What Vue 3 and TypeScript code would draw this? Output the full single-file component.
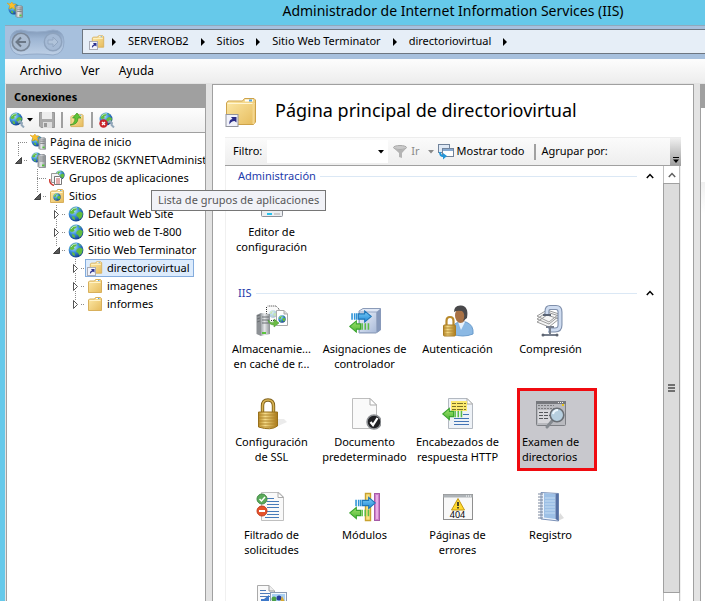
<script setup lang="ts">
import { ref } from 'vue'

interface TreeNode {
  label: string
  icon: string
  depth: number
  state: 'open' | 'closed' | 'leaf'
  up?: boolean
  down?: boolean
}

interface Feature {
  icon: string
  lines: string[]
  badge?: string
}

interface FeatureGroup {
  name: string
  items: Feature[]
}

const crumbs = ['SERVEROB2', 'Sitios', 'Sitio Web Terminator', 'directoriovirtual']
const menus = ['Archivo', 'Ver', 'Ayuda']

const tree: TreeNode[] = [
  { label: 'Página de inicio', icon: 'start', depth: 0, state: 'leaf', down: true },
  { label: 'SERVEROB2 (SKYNET\\Administrador)', icon: 'server', depth: 0, state: 'open', up: true },
  { label: 'Grupos de aplicaciones', icon: 'pools', depth: 1, state: 'leaf', up: true, down: true },
  { label: 'Sitios', icon: 'sites', depth: 1, state: 'open', up: true },
  { label: 'Default Web Site', icon: 'globe', depth: 2, state: 'closed', up: true, down: true },
  { label: 'Sitio web de T-800', icon: 'globe', depth: 2, state: 'closed', up: true, down: true },
  { label: 'Sitio Web Terminator', icon: 'globe', depth: 2, state: 'open', up: true },
  { label: 'directoriovirtual', icon: 'vdir', depth: 3, state: 'closed', up: true, down: true },
  { label: 'imagenes', icon: 'folder', depth: 3, state: 'closed', up: true, down: true },
  { label: 'informes', icon: 'folder', depth: 3, state: 'closed', up: true },
]

const groups: FeatureGroup[] = [
  { name: 'Administración', items: [{ icon: 'editor', lines: ['Editor de', 'configuración'] }] },
  {
    name: 'IIS',
    items: [
      { icon: 'cache', lines: ['Almacenamie...', 'en caché de r...'] },
      { icon: 'handlers', lines: ['Asignaciones de', 'controlador'] },
      { icon: 'auth', lines: ['Autenticación'] },
      { icon: 'compress', lines: ['Compresión'] },
      { icon: 'lock', lines: ['Configuración', 'de SSL'] },
      { icon: 'default-doc', lines: ['Documento', 'predeterminado'] },
      { icon: 'headers', lines: ['Encabezados de', 'respuesta HTTP'] },
      { icon: 'browse', lines: ['Examen de', 'directorios'] },
      { icon: 'filter-req', lines: ['Filtrado de', 'solicitudes'] },
      { icon: 'modules', lines: ['Módulos'] },
      { icon: 'errors', lines: ['Páginas de', 'errores'], badge: '404' },
      { icon: 'log', lines: ['Registro'] },
      { icon: 'mime', lines: [] },
    ],
  },
]

const filterText = ref('')
const selectedNode = ref('directoriovirtual')
const selectedFeature = ref('browse')
</script>

<template>
  <div class="window">
    <svg class="defs" aria-hidden="true">
      <defs>
        <linearGradient id="g-folder" x1="0" y1="0" x2="1" y2="1">
          <stop offset="0" stop-color="#fdeaa9" /><stop offset="1" stop-color="#e6bb5c" />
        </linearGradient>
        <radialGradient id="g-globe" cx=".35" cy=".3" r=".8">
          <stop offset="0" stop-color="#b9e6fc" /><stop offset=".45" stop-color="#3a8edb" /><stop offset="1" stop-color="#0c2f80" />
        </radialGradient>
        <linearGradient id="g-gold" x1="0" y1="0" x2="1" y2="0">
          <stop offset="0" stop-color="#b98a25" /><stop offset=".35" stop-color="#f6dd8b" /><stop offset="1" stop-color="#a87715" />
        </linearGradient>
        <linearGradient id="g-steel" x1="0" y1="0" x2="1" y2="0">
          <stop offset="0" stop-color="#a3a8ac" /><stop offset=".4" stop-color="#e6e8ea" /><stop offset="1" stop-color="#8b9094" />
        </linearGradient>
        <linearGradient id="g-box" x1="0" y1="0" x2="1" y2="1">
          <stop offset="0" stop-color="#eef3fb" /><stop offset="1" stop-color="#a9bad9" />
        </linearGradient>
        <linearGradient id="g-green" x1="0" y1="0" x2="0" y2="1">
          <stop offset="0" stop-color="#9fe26a" /><stop offset="1" stop-color="#4fb738" />
        </linearGradient>
        <linearGradient id="g-blue" x1="0" y1="0" x2="0" y2="1">
          <stop offset="0" stop-color="#7fd0fa" /><stop offset="1" stop-color="#1c86d4" />
        </linearGradient>
        <linearGradient id="g-nav" x1="0" y1="0" x2="0" y2="1">
          <stop offset="0" stop-color="#8199b8" /><stop offset=".35" stop-color="#9db5d3" /><stop offset="1" stop-color="#bed0e6" />
        </linearGradient>
      </defs>

      <symbol id="globe" viewBox="0 0 16 16">
        <circle cx="8" cy="8" r="7.4" fill="url(#g-globe)" />
        <path d="M3 3.5 6 1.6 9 2 8 4 6 5 6.5 7 4 8 1.5 7zM9 7 12 5.5 14.8 7 14 11 11.5 13.5 10 11 8 9.500zM4 10 6.500 11 7 14 4.500 13zM10 1.300 13 3 11.500 4z" fill="#62bd3f" />
        <path d="M3 5Q5 1.600 9 1.800" stroke="#d8f2ff" stroke-width="1" fill="none" opacity=".7" />
      </symbol>
      <symbol id="tower" viewBox="0 0 9 14">
        <path d="M1 1 7 .500 8.500 1.500V13.500H2L1 12.500z" fill="url(#g-steel)" stroke="#80858a" stroke-width=".8" />
        <path d="M2.500 3H7.500M2.500 5H7.500M2.500 7H7.500" stroke="#6a6d70" stroke-width=".8" />
        <rect x="5" y="10.500" width="2.400" height="1.800" fill="#53c438" />
      </symbol>
      <symbol id="server" viewBox="0 0 16 16">
        <use href="#globe" x="1" y="0" width="11" height="11" />
        <use href="#tower" x="7" y="2" width="9" height="14" />
      </symbol>
      <symbol id="start" viewBox="0 0 16 16">
        <use href="#globe" x="1" y="1" width="12" height="12" />
        <path d="M0 1 3 2 5 0 6 2 9 2 7 4 8 7 5 5.500 2 7 3 4z" fill="#f9c02c" stroke="#dc9a1c" stroke-width=".5" />
        <use href="#tower" x="8" y="3" width="8" height="13" />
      </symbol>
      <symbol id="folder" viewBox="0 0 16 16">
        <path d="M1.500 4V14.500H14.500V2.500L13.500 1.500H8.500L7.500 3H2.500z" fill="url(#g-folder)" stroke="#d8b05c" />
        <path d="M9 2.500H13" stroke="#fff" /><path d="M11 2.500H12.500" stroke="#59a7dd" />
        <path d="M2.500 4.500H13.500" stroke="#fff3c9" />
      </symbol>
      <symbol id="vdir" viewBox="0 0 16 16">
        <use href="#folder" x="2" y="0" width="14" height="15" />
        <rect x=".5" y="7.500" width="8" height="8" fill="#f3f4fb" stroke="#a9acb6" />
        <path d="M3 14Q2.500 11 5 10.500L4 9H7.500V12.500L6 11.500Q4 12 3 14" fill="#2c318f" />
      </symbol>
      <symbol id="vdir-big" viewBox="0 0 32 32">
        <path d="M1.500 6V27.500H28.500L30.500 25V3L29 1.500H19.500L17.500 4H3z" fill="url(#g-folder)" stroke="#cda24a" />
        <path d="M2.500 6.500H29.500" stroke="#fff5d2" /><rect x="20" y="2.500" width="8" height="2" fill="#fff" /><rect x="24" y="2.500" width="3" height="2" fill="#58a4d8" />
        <path d="M28.500 6V27" stroke="#f4d68e" stroke-width="2" />
        <rect x="1" y="17.500" width="12" height="12" fill="#f1f2fb" stroke="#92949d" />
        <path d="M4.500 27.500Q3.500 22.500 7.500 22L6 20H11.500V25.500L9.500 24Q6 24 4.500 27.500" fill="#2a2c86" />
      </symbol>
      <symbol id="sites" viewBox="0 0 16 16">
        <use href="#folder" width="16" height="16" />
        <use href="#globe" x="4" y="5" width="8" height="8" />
      </symbol>
      <symbol id="pools" viewBox="0 0 16 16">
        <use href="#globe" x="6" y="0" width="10" height="10" />
        <path d="M2.500 3.500H8.500L10.500 5.500V12.500H2.500z" fill="#f3f3f3" stroke="#999" />
        <path d="M5.500 6.500H10.500L12.500 8.500V14.500H5.500z" fill="#fff" stroke="#777" />
        <path d="M7 9H11M7 11H11M7 13H11" stroke="#c45c5c" />
        <path d="M.8 9Q0 14 5 15.500" stroke="#cf3d35" stroke-width="1.500" fill="none" />
      </symbol>
      <symbol id="plug-globe" viewBox="0 0 16 16">
        <use href="#globe" x="0" y="0" width="14" height="14" />
        <path d="M9 10.500 11 9 13 11 12.500 13 15 15.500" stroke="#93a8ba" stroke-width="2" fill="none" />
      </symbol>
      <symbol id="disconnect" viewBox="0 0 16 16">
        <use href="#plug-globe" width="16" height="16" />
        <circle cx="4.500" cy="11.500" r="4.200" fill="#c9262b" /><path d="M3 10 6 13M6 10 3 13" stroke="#fff" stroke-width="1.400" />
      </symbol>
      <symbol id="save" viewBox="0 0 16 16">
        <path d="M.5.500H15.500V15.500H2L.5 14z" fill="#a9a9a9" stroke="#979797" />
        <rect x="3" y="0" width="10" height="7" fill="#ededed" /><rect x="4" y="10" width="9" height="6" fill="#dedede" /><rect x="5" y="11" width="3" height="4" fill="#999" />
      </symbol>
      <symbol id="folder-up" viewBox="0 0 16 16">
        <use href="#folder" x="0" y="1" width="16" height="15" />
        <path d="M1 13Q6 12 6 6H3.500L8 1 12 6H9Q9 13 1 13" fill="#5fc336" stroke="#3a9420" stroke-width=".7" />
      </symbol>
      <symbol id="arrow-left" viewBox="0 0 20 12">
        <path d="M.700 6 7 .700V3.500H11V8.500H7V11.300z" fill="url(#g-green)" stroke="#3ba52f" />
        <path d="M12.500 3V9M15.500 3V9M18.500 3V9" stroke="#5cbd45" stroke-width="1.500" />
      </symbol>
      <symbol id="arrow-right" viewBox="0 0 20 12">
        <path d="M19.300 6 13 .700V3.500H7V8.500H13V11.300z" fill="url(#g-blue)" stroke="#1f76b8" />
        <path d="M1 3V9M3.500 3V9M5.500 3V9" stroke="#2f94d8" stroke-width="1.500" />
      </symbol>

      <symbol id="editor" viewBox="0 0 32 32">
        <rect x="5.500" y="2.500" width="21" height="26" rx="1" fill="#eceef1" stroke="#8c9098" />
        <rect x="8.500" y="6.500" width="15" height="16" fill="#f8fbff" stroke="#a9b4c4" />
        <path d="M10 20.500H22" stroke="#98a9c2" /><path d="M11 26H16" stroke="#25c2ed" stroke-width="2" /><path d="M18 26H24" stroke="#aaa" />
      </symbol>
      <symbol id="cache" viewBox="0 0 32 32">
        <path d="M10.500 2V15.500H23V4L20 1H11.500" fill="#fafafa" stroke="#333" stroke-dasharray="1 1" />
        <use href="#globe" x="13" y="5" width="8" height="8" opacity=".35" />
        <path d="M.500 10 5 8V31L.500 29z" fill="#8d9195" /><path d="M5 8 14 9V29L5 31z" fill="url(#g-steel)" /><path d="M1 11 4 10M1 14 4 13M1 17 4 16M6 12H13M6 15H13M6 18H13" stroke="#6b6f73" /><rect x="6" y="27" width="4" height="2" fill="#5bc43d" />
        <path d="M20.500 5.500H28L31.500 9V20.500H20.500z" fill="#fff" stroke="#aaa" /><path d="M28 5.500V9H31.500" fill="#ddd" stroke="#aaa" />
        <use href="#globe" x="22" y="10" width="8" height="8" />
        <path d="M12 15Q15 19 18 17V14L23 18 18 22V20Q13 20 12 15" fill="#6cbb45" stroke="#4c9a38" stroke-width=".6" />
      </symbol>
      <symbol id="handlers" viewBox="0 0 32 32">
        <path d="M10 6 14 3.500H31.500V25L27 28H10z" fill="#dfe7f5" stroke="#8b9bb8" /><path d="M27.500 7 31.500 3.500V25L27.500 28z" fill="#8598bb" />
        <rect x="10.500" y="7" width="17" height="20.500" fill="url(#g-box)" stroke="#98a8c5" />
        <use href="#arrow-right" x="2" y="5" width="21" height="13" /><use href="#arrow-left" x="0" y="15" width="21" height="13" />
      </symbol>
      <symbol id="auth" viewBox="0 0 32 32">
        <path d="M10 29Q9 18 18 17L24 17Q32 20 31 29Q21 33 10 29" fill="#8bb9e4" stroke="#6a9ccc" />
        <path d="M16 17 19 25 23 17z" fill="#e7f1fb" />
        <ellipse cx="18.500" cy="10.500" rx="5.500" ry="7.500" fill="#a87145" /><path d="M12 7Q12 0 19 .500 27 1 25 13L21 16Q24 9 20 6 15 5 12 7" fill="#49484a" />
        <path d="M4.500 20V16Q4.500 12 8 12T11.500 16V20" stroke="#b98a2c" stroke-width="2.200" fill="none" />
        <rect x="1.500" y="20" width="12" height="11" rx="1" fill="url(#g-gold)" stroke="#a87c26" /><path d="M2 23H13M2 26H13M2 29H13" stroke="#b58a34" />
      </symbol>
      <symbol id="compress" viewBox="0 0 32 32">
        <path d="M2 17 14 22 24 14 12 10zM2 14 14 19 24 11 12 7zM2 11 14 17 24 9 12 5z" fill="#f5f5f5" stroke="#9b9b9b" />
        <path d="M12 10V6Q12 2.500 15 2.500H21Q25 2.500 25 7V20Q25 25 20 25H13" stroke="#7f8fab" stroke-width="5" fill="none" />
        <path d="M12 10V6Q12 2.500 15 2.500H21Q25 2.500 25 7V20Q25 25 20 25H13" stroke="#cfdcf0" stroke-width="2.800" fill="none" />
        <path d="M8 10H16" stroke="#596273" stroke-width="2" /><path d="M15 22V30M8 30H22M11 22H19" stroke="#777f8d" stroke-width="2" /><circle cx="8" cy="30" r="1.500" fill="#5d6470" /><circle cx="22" cy="30" r="1.500" fill="#5d6470" />
      </symbol>
      <symbol id="lock" viewBox="0 0 32 32">
        <path d="M22 28 31 24 28 21H22z" fill="#ddd" opacity=".6" />
        <path d="M6.500 15V8Q6.500 2 12 2T17.500 8V15" stroke="#80611b" stroke-width="3.400" fill="none" /><path d="M6.500 15V8Q6.500 2 12 2T17.500 8V15" stroke="#d8b455" stroke-width="1.600" fill="none" />
        <path d="M2.500 14H21.500V28Q15 33 2.500 29z" fill="url(#g-gold)" stroke="#98701b" />
        <path d="M3 17H21M3 20H21M3 23H21M3 26H21M5 29H19" stroke="#b0852c" />
      </symbol>
      <symbol id="default-doc" viewBox="0 0 32 32">
        <path d="M3.500.500H21L27.500 7V30.500H3.500z" fill="#fafafa" stroke="#bdbdbd" /><path d="M21 .500V7H27.500z" fill="#fff" stroke="#aaa" />
        <circle cx="25" cy="24" r="7" fill="#202124" stroke="#8f9296" stroke-width="1.500" /><path d="M21.500 24 24 27 28.500 20" stroke="#fff" stroke-width="2.300" fill="none" />
      </symbol>
      <symbol id="headers" viewBox="0 0 32 32">
        <path d="M6.500.500H25L30.500 6V30.500H6.500z" fill="#eef2f7" stroke="#b3b9c1" /><path d="M25 .500V6H30.500z" fill="#fff" stroke="#aaa" />
        <rect x="9" y="3" width="16" height="10" fill="#fbe96f" /><path d="M10 5.500H24M10 8.500H24M10 11.500H24" stroke="#7a7028" stroke-dasharray="4 1 6 1" />
        <path d="M21 16.500H27M12 20.500H27M12 23.500H27M12 26.500H27" stroke="#4374b5" /><use href="#arrow-left" x="0" y="9" width="21" height="14" />
      </symbol>
      <symbol id="browse" viewBox="0 0 32 32">
        <rect x="1.500" y="3.500" width="29" height="24" rx="1" fill="#b9babf" stroke="#7d7f84" /><rect x="1" y="3" width="30" height="3" fill="#76787d" /><path d="M23 4.500H29" stroke="#eee" stroke-dasharray="1 1" /><rect x="27" y="6" width="2" height="2" fill="#e6c21c" />
        <path d="M3 7.500H19M3 10.500H20" stroke="#7b7c80" stroke-dasharray="2 1" /><rect x="3" y="12" width="13" height="13" fill="#d7d7db" /><path d="M4 14.500H13M4 17.500H15M4 20.500H14" stroke="#55575b" stroke-dasharray="4 1" />
        <path d="M17 23 12 29" stroke="#858a90" stroke-width="3" stroke-linecap="round" /><circle cx="22" cy="17" r="6.800" fill="#b7cfdf" stroke="#696e74" stroke-width="1.600" /><path d="M18 16Q19 12 23 12" stroke="#eef8ff" stroke-width="2" fill="none" />
      </symbol>
      <symbol id="filter-req" viewBox="0 0 32 32">
        <path d="M5.500 1.500H23L27.500 6V29.500H5.500z" fill="#f9f9f9" stroke="#bfbfbf" /><path d="M22 1.500V6.500H27.500z" fill="#fff" stroke="#aaa" /><path d="M11 7.500H18M11 10.500H23M11 13.500H23M11 16.500H23M11 20.500H23M11 23.500H23M9 26.500H23" stroke="#477bb9" />
        <circle cx="6" cy="8" r="5" fill="#5aab5a" stroke="#418a45" /><path d="M3.500 8 5.500 10 9 6" stroke="#fff" stroke-width="1.500" fill="none" /><circle cx="6" cy="20" r="5" fill="#e5532c" stroke="#c53c1c" /><path d="M3 20H9" stroke="#fff" stroke-width="2" />
      </symbol>
      <symbol id="modules" viewBox="0 0 32 32">
        <path d="M16.500 2.500H21.500V29.500H16.500z" fill="#f8e184" stroke="#c9a22e" stroke-width="1.400" /><rect x="25.500" y="2.500" width="5" height="27" fill="#ce7fcb" stroke="#a65ba7" />
        <path d="M28 4V28" stroke="#e9aee5" stroke-width="2" />
        <use href="#arrow-right" x="6" y="5" width="21" height="14" /><use href="#arrow-left" x="0" y="15" width="21" height="14" />
      </symbol>
      <symbol id="errors" viewBox="0 0 32 32">
        <rect x="1.500" y="3.500" width="29" height="25" fill="#f8f8f8" stroke="#8f8f8f" /><rect x="1.500" y="3.500" width="29" height="3" fill="#aeb3b7" /><path d="M24 5H30" stroke="#fff" stroke-dasharray="1 1" />
        <path d="M16 7.500 22.500 19H9.500z" fill="#ffd92f" stroke="#c39812" /><path d="M16 11V15M16 16V17.500" stroke="#222" stroke-width="1.600" />
      </symbol>
      <symbol id="log" viewBox="0 0 32 32">
        <path d="M23 30 29 27 25 22z" fill="#ddd" /><path d="M6 1.500 23.500 2.500V30L6 28z" fill="#eef4fd" stroke="#7c92b8" /><path d="M9 2 20.500 3V28L9 26.500z" fill="#9dc0e6" /><path d="M20.500 3 23.500 2.500V30L20.500 28z" fill="#5570a3" /><path d="M10 7H20M10 10H20M10 13H20M10 16H20M10 19H20M10 22H20" stroke="#c4dcf3" />
        <path d="M7.500 2V28" stroke="#d8e2ef" /><path d="M3 3H8M3 6H8M3 9H8M3 12H8M3 15H8M3 18H8M3 21H8M3 24H8M3 27H8" stroke="#7a879d" />
      </symbol>
      <symbol id="mime" viewBox="0 0 32 32">
        <path d="M1.500 1.500H13L18.500 7V30.500H1.500z" fill="#fafafa" stroke="#aaa" /><path d="M13 1.500V7H18.500" fill="#eee" stroke="#999" /><path d="M4 6.500H10M4 9.500H14M4 12.500H14" stroke="#4e7cba" />
        <rect x="14.500" y="8.500" width="16" height="22" fill="#f3f8fd" stroke="#8a9bb3" /><rect x="16" y="10" width="13" height="20" fill="#a9cff2" /><path d="M5 15H8L13 11V24L8 20H5z" fill="#3d78c9" /><circle cx="18" cy="15" r="2.500" fill="#4ca247" /><circle cx="23" cy="14" r="2.500" fill="#263e9b" /><path d="M24 18 26 12 29 18z" fill="#d9a92f" />
      </symbol>
      <symbol id="funnel" viewBox="0 0 14 14">
        <ellipse cx="7" cy="2.500" rx="6.500" ry="2" fill="#c9c9c9" stroke="#a8a8a8" /><path d="M.500 3Q7 6 13.500 3L9 8V13L6 12V8z" fill="#b4b4b4" />
      </symbol>
      <symbol id="show-all" viewBox="0 0 16 16">
        <rect x=".5" y=".5" width="11" height="8" fill="#dfe9f5" stroke="#71839b" /><rect x="4.500" y="4.500" width="11" height="8" fill="#fff" stroke="#71839b" /><path d="M5 6H15" stroke="#87a9d0" stroke-width="2" /><path d="M1 8Q1 13 5 13V15.500L9 12 5 9V11Q3 11 3 8z" fill="#2596d8" />
      </symbol>
      <symbol id="chevron" viewBox="0 0 8 6"><path d="M.800 5 4 1.500 7.200 5" fill="none" stroke="currentColor" stroke-width="1.500" /></symbol>
      <symbol id="caret" viewBox="0 0 6 4"><path d="M0 0H6L3 3.500z" fill="currentColor" /></symbol>
      <symbol id="crumb" viewBox="0 0 4 8"><path d="M0 0 4 4 0 8z" fill="#000" /></symbol>
    </svg>

    <header class="title-bar">
      <svg class="i16"><use href="#start" /></svg>
      <span class="title-text">Administrador de Internet Information Services (IIS)</span>
    </header>

    <div class="shell">
      <nav class="nav-bar" aria-label="Ruta">
        <div class="history">
          <svg class="history-bg" viewBox="0 0 56 27" aria-hidden="true">
            <path d="M12 1Q20 3 28 3T44 1Q55 1 55 13T44 26Q36 25 28 25T12 26Q1 25 1 13T12 1" fill="url(#g-nav)" stroke="#93aac8" />
          </svg>
          <button type="button" class="round" aria-label="Atrás">
            <svg viewBox="0 0 20 20"><circle cx="10" cy="10" r="8.700" fill="#aabbd0" stroke="#7a8798" stroke-width="1.600" /><path d="M15 10H6M10 5.500 5.500 10 10 14.500" fill="none" stroke="#6b7786" stroke-width="2" /></svg>
          </button>
          <button type="button" class="round" aria-label="Adelante">
            <svg viewBox="0 0 20 20"><circle cx="10" cy="10" r="8.700" fill="#a5bad5" stroke="#8ea3be" stroke-width="1.400" /><path d="M5 8H10V5L15 10 10 15V12H5z" fill="#b0c3da" stroke="#91a6c1" /></svg>
          </button>
        </div>
        <div class="address">
          <svg class="i16"><use href="#vdir" /></svg>
          <svg class="crumb-arrow"><use href="#crumb" /></svg>
          <template v-for="c in crumbs" :key="c">
            <button type="button" class="crumb">{{ c }}</button>
            <svg class="crumb-arrow"><use href="#crumb" /></svg>
          </template>
        </div>
      </nav>

      <nav class="menu-bar" aria-label="Menú">
        <button v-for="m in menus" :key="m" type="button">{{ m }}</button>
      </nav>

      <div class="panes">
        <aside class="connections">
          <h2>Conexiones</h2>
          <div class="conn-tools">
            <button type="button" class="tool" aria-label="Conectar">
              <svg class="i16"><use href="#plug-globe" /></svg><svg class="caret"><use href="#caret" /></svg>
            </button>
            <button type="button" class="tool" aria-label="Guardar"><svg class="i16"><use href="#save" /></svg></button>
            <i class="sep"></i>
            <button type="button" class="tool" aria-label="Subir"><svg class="i16"><use href="#folder-up" /></svg></button>
            <i class="sep"></i>
            <button type="button" class="tool" aria-label="Desconectar"><svg class="i16"><use href="#disconnect" /></svg></button>
          </div>
          <ul class="tree" role="tree">
            <li v-for="n in tree" :key="n.label" role="treeitem" :class="['node', 'depth-' + n.depth]">
              <svg class="guide" viewBox="0 0 18 18" aria-hidden="true">
                <path v-if="n.up" :d="n.state === 'leaf' ? 'M8.500 0V9' : 'M8.500 0V5'" class="dots" />
                <path v-if="n.down" :d="n.state === 'leaf' ? 'M8.500 10V18' : 'M8.500 14V18'" class="dots" />
                <path :d="n.state === 'leaf' ? 'M8 9.500H18' : 'M14 9.500H18'" class="dots" />
                <path v-if="n.state === 'open'" d="M11.500 6.500V12.500H5.500z" class="tri-open" />
                <path v-if="n.state === 'closed'" d="M6.500 5.500 10.500 9.500 6.500 13.500z" class="tri-closed" />
              </svg>
              <button type="button" :class="['node-body', { selected: n.label === selectedNode }]" @click="selectedNode = n.label">
                <svg class="i16"><use :href="'#' + n.icon" /></svg><span class="node-label">{{ n.label }}</span>
              </button>
            </li>
          </ul>
        </aside>

        <main class="workspace">
          <div class="page-head">
            <svg class="i32"><use href="#vdir-big" /></svg>
            <h1>Página principal de directoriovirtual</h1>
          </div>
          <div class="filter-bar">
            <label for="filter">Filtro:</label>
            <div class="combo">
              <input id="filter" v-model="filterText" type="text" />
              <button type="button" aria-label="Filtros recientes"><svg class="caret"><use href="#caret" /></svg></button>
            </div>
            <button type="button" class="tool go" disabled>
              <svg class="funnel"><use href="#funnel" /></svg><span>Ir</span><svg class="caret"><use href="#caret" /></svg>
            </button>
            <button type="button" class="tool show"><svg class="i16"><use href="#show-all" /></svg><span>Mostrar todo</span></button>
            <i class="sep"></i>
            <span>Agrupar por:</span>
            <button type="button" class="overflow" aria-label="Más opciones">
              <svg viewBox="0 0 6 6"><path d="M0 .500H6" stroke="#000" /><path d="M0 2.500H6L3 6z" /></svg>
            </button>
          </div>
          <div class="list-wrap">
            <div class="list">
              <section v-for="g in groups" :key="g.name" class="group">
                <header>
                  <h3>{{ g.name }}</h3><hr />
                  <button type="button" :aria-label="'Contraer ' + g.name"><svg class="chev"><use href="#chevron" /></svg></button>
                </header>
                <div class="grid">
                  <button
                    v-for="f in g.items" :key="f.icon" type="button"
                    :class="['feature', { active: f.icon === selectedFeature }]"
                    :aria-label="f.lines.join(' ') || 'Tipos MIME'"
                    @click="selectedFeature = f.icon"
                  >
                    <span class="picture">
                      <svg class="i32"><use :href="'#' + f.icon" /></svg>
                      <span v-if="f.badge" class="badge">{{ f.badge }}</span>
                    </span>
                    <span class="caption"><span v-for="l in f.lines" :key="l">{{ l }}</span></span>
                  </button>
                </div>
              </section>
            </div>
            <div class="scroll" aria-hidden="true">
              <div class="scroll-btn"><svg class="chev"><use href="#chevron" /></svg></div>
              <div class="thumb"><i></i><i></i><i></i></div>
              <div class="scroll-end"></div>
            </div>
          </div>
        </main>

        <aside class="actions">
          <div class="actions-head"></div>
          <div class="actions-body"></div>
        </aside>
      </div>
    </div>

    <div class="tooltip" role="tooltip">Lista de grupos de aplicaciones</div>
  </div>
</template>

<style>
body {
  margin: 0;
  overflow: hidden;
}
</style>

<style scoped>
.window {
  position: relative;
  display: flex;
  flex-direction: column;
  height: 100vh;
  overflow: hidden;
  background: #66c9ea;
  color: #000;
  font-family: 'Noto Sans', 'Open Sans', sans-serif;
  font-size: 11px;
  line-height: 15px;
}
.window * {
  box-sizing: border-box;
}
.defs {
  position: absolute;
  width: 0;
  height: 0;
}
svg {
  display: block;
  flex: none;
}
button {
  margin: 0;
  padding: 0;
  border: 0;
  background: none;
  color: inherit;
  font: inherit;
}
h1, h2, h3, ul {
  margin: 0;
  padding: 0;
  list-style: none;
  font-size: 11px;
  font-weight: 400;
}
.i16 { width: 16px; height: 16px; }
.i32 { width: 32px; height: 32px; }
.caret { width: 6px; height: 4px; }
.chev { width: 8px; height: 6px; }

.title-bar {
  display: flex;
  align-items: flex-start;
  flex: none;
  height: 25px;
  padding: 2px 0 0 7px;
}
.title-text {
  flex: 1;
  padding-left: 178px;
  text-align: center;
  font-size: 14px;
  line-height: 18px;
  white-space: nowrap;
}

.shell {
  display: flex;
  flex: 1;
  flex-direction: column;
  min-height: 0;
  margin-left: 5px;
  border-top: 1px solid #8fa9bd;
  background: #e3e3e3;
}
.nav-bar {
  display: flex;
  flex: none;
  align-items: center;
  height: 33px;
  padding-bottom: 2px;
  background: #a7c0dd;
}
.history {
  position: relative;
  display: flex;
  gap: 12px;
  width: 56px;
  margin: 0 17px 0 4px;
  padding-left: 2px;
}
.history-bg {
  position: absolute;
  left: 0;
  top: -3px;
  width: 56px;
  height: 27px;
}
.round {
  position: relative;
  width: 20px;
  height: 20px;
}
.address {
  display: flex;
  flex: 1;
  align-items: center;
  gap: 12px;
  height: 25px;
  padding-left: 6px;
  border: 1px solid #6d7680;
  border-right: 0;
  background: #e6eef7;
  white-space: nowrap;
}
.address .i16 { margin-right: -5px; }
.crumb { padding-bottom: 2px; }
.crumb-arrow { width: 4px; height: 8px; }

.menu-bar {
  display: flex;
  flex: none;
  gap: 19px;
  height: 25px;
  padding: 0 0 2px 15px;
  border-bottom: 1px solid #e3e3e3;
  background: linear-gradient(#fdfdfd, #ededed);
  font-size: 12px;
}

.panes {
  display: flex;
  flex: 1;
  gap: 6px;
  min-height: 0;
}
.connections {
  display: flex;
  flex: none;
  flex-direction: column;
  width: 200px;
  margin-left: 1px;
  border: 1px solid #a0a0a0;
  border-bottom: 0;
  background: #fff;
}
.connections h2 {
  height: 23px;
  padding-left: 7px;
  background: #a0a0a0;
  font-weight: 700;
  line-height: 23px;
}
.conn-tools {
  display: flex;
  flex: none;
  align-items: center;
  gap: 6px;
  height: 25px;
  padding-left: 2px;
  border-bottom: 1px solid #a0a0a0;
  background: linear-gradient(#fdfdfd, #efefef);
}
.tool {
  display: flex;
  align-items: center;
  gap: 2px;
}
.sep {
  width: 2px;
  height: 16px;
  background: #a0a0a0;
}
.tree {
  flex: 1;
  overflow: hidden;
}
.node {
  display: flex;
  height: 18px;
  padding-left: 3px;
}
.depth-1 { padding-left: 22px; }
.depth-2 { padding-left: 41px; }
.depth-3 { padding-left: 60px; }
.guide {
  width: 18px;
  height: 18px;
}
.dots {
  fill: none;
  stroke: #8a8a8a;
  stroke-dasharray: 1 1;
  shape-rendering: crispEdges;
}
.tri-open {
  fill: #595959;
  stroke: #404040;
}
.tri-closed {
  fill: #fff;
  stroke: #555;
}
.node-body {
  display: flex;
  align-items: center;
  gap: 4px;
  height: 18px;
  padding: 0 3px 0 1px;
  border: 1px solid transparent;
  white-space: nowrap;
}
.node-label { padding-bottom: 2px; }
.node-body.selected {
  border-color: #84acdd;
  background: #dcebfc;
}

.workspace {
  display: flex;
  flex: 1;
  flex-direction: column;
  min-width: 0;
  padding: 12px 12px 0;
  border: 1px solid #a0a0a0;
  border-bottom: 0;
  background: #fff;
}
.page-head {
  display: flex;
  flex: none;
  align-items: center;
  gap: 18px;
  height: 32px;
  margin-bottom: 8px;
}
h1 {
  padding-bottom: 6px;
  font-size: 18px;
  line-height: 24px;
  white-space: nowrap;
}
.filter-bar {
  display: flex;
  flex: none;
  align-items: center;
  height: 29px;
  padding-left: 8px;
  border-top: 1px solid #ededed;
  border-bottom: 1px solid #a0a0a0;
  background: linear-gradient(#fbfbfb, #eeeeee);
  white-space: nowrap;
}
.filter-bar label,
.filter-bar span { padding-bottom: 2px; }
.combo {
  display: flex;
  width: 121px;
  height: 23px;
  margin: 0 5px;
  background: #fff;
}
.combo input {
  flex: 1;
  min-width: 0;
  padding: 0 4px;
  border: 0;
  outline: 0;
  background: transparent;
  font: inherit;
}
.combo button {
  display: flex;
  align-items: center;
  justify-content: center;
  width: 14px;
}
.go {
  gap: 4px;
  color: #8a8a8a;
}
.go .caret { margin-left: 4px; }
.funnel { width: 14px; height: 14px; }
.show {
  gap: 3px;
  margin: 0 10px 0 4px;
}
.filter-bar .sep { margin-right: 5px; }
.overflow {
  display: flex;
  align-items: flex-end;
  justify-content: center;
  align-self: stretch;
  width: 11px;
  margin-left: auto;
  padding-bottom: 2px;
  background: linear-gradient(#f0f0f0, #a0a0a0);
}
.overflow svg { width: 6px; height: 6px; }

.list-wrap {
  display: flex;
  flex: 1;
  min-height: 0;
  border: 1px solid #f0f0f0;
  border-width: 0 1px;
}
.list {
  flex: 1;
  min-width: 0;
  overflow: hidden;
}
.group { margin-bottom: 4px; }
.group header {
  display: flex;
  align-items: center;
  height: 20px;
  padding: 0 9px 0 12px;
}
.group h3 {
  padding-bottom: 2px;
  color: #1e3bab;
}
.group hr {
  flex: 1;
  height: 1px;
  margin: 0 9px 0 4px;
  border: 0;
  background: #dbe8f5;
}
.grid {
  display: grid;
  grid-template-columns: repeat(auto-fill, 93px);
  grid-auto-rows: 93px;
}
.feature {
  position: relative;
  display: flex;
  flex-direction: column;
  align-items: center;
  gap: 4px;
  padding: 2px 2px 0 0;
}
.picture {
  position: relative;
}
.badge {
  position: absolute;
  inset: auto 0 4px;
  font-size: 9px;
  line-height: 9px;
  text-align: center;
}
.caption {
  position: relative;
  display: flex;
  flex-direction: column;
  align-items: center;
  white-space: nowrap;
}
.active .caption { align-items: flex-start; }
.feature.active::before {
  content: '';
  position: absolute;
  inset: -8px 1px 18px 12px;
  border: 3px solid #f00b10;
  background: #c8c8cd;
}
.scroll {
  display: flex;
  flex: none;
  flex-direction: column;
  width: 17px;
  border: 1px solid #c0c0c0;
  border-width: 0 1px;
  background: #fff;
}
.scroll-btn {
  display: flex;
  align-items: center;
  justify-content: center;
  height: 17px;
  color: #606060;
}
.thumb {
  display: flex;
  flex: 1;
  flex-direction: column;
  align-items: center;
  justify-content: center;
  gap: 1px;
  margin: 0 -1px;
  border: 1px solid #a0a0a0;
  background: #dcdcdc;
}
.thumb i {
  width: 7px;
  height: 2px;
  background: #707070;
}
.scroll-end { height: 8px; }

.actions {
  flex: none;
  width: 5px;
  border-left: 1px solid #a0a0a0;
  background: #fff;
}
.actions-head {
  height: 24px;
  background: #a0a0a0;
}
.actions-body {
  height: 31px;
  margin-top: 74px;
  background: linear-gradient(#f0f0f0, #fff);
}

.tooltip {
  position: absolute;
  left: 151px;
  top: 190px;
  padding: 1px 6px 3px;
  border: 1px solid #767676;
  background: #f1f2f7;
  color: #575757;
  white-space: nowrap;
}
</style>
